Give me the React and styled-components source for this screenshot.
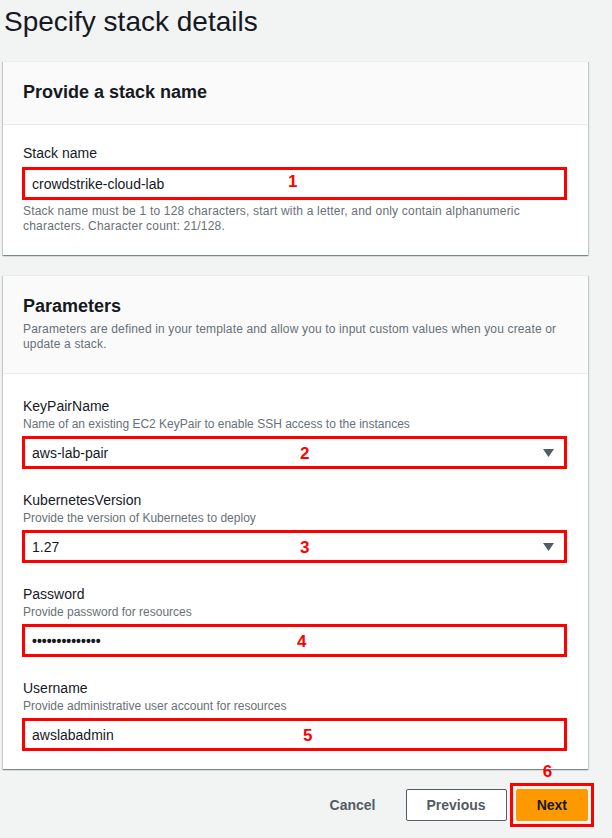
import React from 'react'
import styled, { createGlobalStyle } from 'styled-components'

const GlobalStyle = createGlobalStyle`
  body {
    margin: 0;
    background: #f2f3f3;
    font-family: "Liberation Sans", Arial, sans-serif;
    color: #16191f;
  }
`

function Arrow() {
  return (
    <svg width="11" height="8" viewBox="0 0 11 8">
      <path d="M0 0 H11 L5.5 8 Z" fill="#545b64" />
    </svg>
  )
}

function Field({ label, hint, value, num, numLeft, select }) {
  return (
    <FieldWrap>
      <Label>{label}</Label>
      {hint && <Hint>{hint}</Hint>}
      <InputBox>
        <span>{value}</span>
        <Num left={numLeft}>{num}</Num>
        {select && <ArrowSlot><Arrow /></ArrowSlot>}
      </InputBox>
    </FieldWrap>
  )
}

function App() {
  return (
    <Page>
      <GlobalStyle />
      <Title>Specify stack details</Title>

      <Card>
        <CardHead>
          <h2>Provide a stack name</h2>
        </CardHead>
        <CardBody first>
          <FieldWrap>
            <Label>Stack name</Label>
            <InputBox>
              <span>crowdstrike-cloud-lab</span>
              <Num left={263} up>1</Num>
            </InputBox>
            <Helper>
              Stack name must be 1 to 128 characters, start with a letter, and only contain alphanumeric
              <br />
              characters. Character count: 21/128.
            </Helper>
          </FieldWrap>
        </CardBody>
      </Card>

      <Card>
        <CardHead>
          <h2>Parameters</h2>
          <p>Parameters are defined in your template and allow you to input custom values when you create or update a stack.</p>
        </CardHead>
        <CardBody>
          <Field
            label="KeyPairName"
            hint="Name of an existing EC2 KeyPair to enable SSH access to the instances"
            value="aws-lab-pair"
            num="2"
            numLeft={275}
            select
          />
          <Field
            label="KubernetesVersion"
            hint="Provide the version of Kubernetes to deploy"
            value="1.27"
            num="3"
            numLeft={275}
            select
          />
          <Field
            label="Password"
            hint="Provide password for resources"
            value={<Dots>••••••••••••••</Dots>}
            num="4"
            numLeft={272}
          />
          <Field
            label="Username"
            hint="Provide administrative user account for resources"
            value="awslabadmin"
            num="5"
            numLeft={278}
          />
        </CardBody>
      </Card>

      <Actions>
        <LinkBtn>Cancel</LinkBtn>
        <Btn>Previous</Btn>
        <NextWrap>
          <StepNum>6</StepNum>
          <Btn primary>Next</Btn>
        </NextWrap>
      </Actions>
    </Page>
  )
}

export default App

const Page = styled.div`
  width: 585px;
  padding-left: 3px;
  padding-top: 4px;
  padding-bottom: 16px;
`

const Title = styled.h1`
  margin: 0 0 0 1px;
  font-size: 28px;
  font-weight: 400;
  line-height: 36px;
  color: #16191f;
  height: 57px;
`

const Card = styled.div`
  background: #fff;
  border-top: 1px solid #eaeded;
  box-shadow: 0 1px 1px 0 rgba(0, 28, 36, 0.3), 1px 1px 1px 0 rgba(0, 28, 36, 0.15),
    -1px 1px 1px 0 rgba(0, 28, 36, 0.15);
  margin-bottom: 20px;
`

const CardHead = styled.div`
  background: #fafafa;
  border-bottom: 1px solid #eaeded;
  padding: 19px 20px 21px;

  h2 {
    margin: 0;
    font-size: 18px;
    font-weight: 700;
    line-height: 22px;
    color: #16191f;
  }

  p {
    margin: 5px 0 0;
    font-size: 12px;
    line-height: 15px;
    letter-spacing: 0.15px;
    color: #687078;
  }
`

const CardBody = styled.div`
  padding: ${p => (p.first ? '18px 21px 21px 19px' : '22px 21px 18px 19px')};
  display: flex;
  flex-direction: column;
  gap: 21px;
`

const FieldWrap = styled.div`
  display: flex;
  flex-direction: column;
`

const Label = styled.div`
  font-size: 14px;
  line-height: 20px;
  color: #16191f;
  padding-left: 1px;
`

const Hint = styled.div`
  font-size: 12px;
  line-height: 16px;
  color: #687078;
  padding-left: 1px;
`

const Helper = styled.div`
  margin-top: 4px;
  font-size: 12px;
  line-height: 15px;
  letter-spacing: 0.2px;
  color: #687078;
  padding-left: 1px;
`

const InputBox = styled.div`
  position: relative;
  margin-top: 4px;
  height: 33px;
  box-sizing: border-box;
  border: 3px solid #ff0000;
  background: #fff;
  padding: 0 7px;
  display: flex;
  align-items: center;
  font-size: 14px;
  color: #16191f;
`

const Dots = styled.span`
  font-size: 14px;
  font-weight: 700;
`

const Num = styled.span`
  position: absolute;
  left: ${p => p.left}px;
  top: ${p => (p.up ? 2 : 5)}px;
  color: #ff0000;
  font-weight: 700;
  font-size: 17px;
  line-height: 20px;
`

const ArrowSlot = styled.span`
  position: absolute;
  right: 10px;
  top: 10px;
  display: flex;
`

const Actions = styled.div`
  display: flex;
  justify-content: flex-end;
  align-items: center;
  height: 32px;
`

const LinkBtn = styled.div`
  padding: 0 20px;
  font-size: 14px;
  font-weight: 700;
  color: #545b64;
  line-height: 32px;
  margin-right: 10px;
`

const Btn = styled.div`
  height: 32px;
  box-sizing: border-box;
  padding: 0 20px;
  display: flex;
  align-items: center;
  font-size: 14px;
  font-weight: 700;
  border-radius: 2px;
  border: 1px solid ${p => (p.primary ? '#ff9900' : '#545b64')};
  background: ${p => (p.primary ? '#ff9900' : '#fff')};
  color: ${p => (p.primary ? '#16191f' : '#545b64')};
`

const NextWrap = styled.div`
  position: relative;
  margin: -6px -6px -6px 3px;
  padding: 3px;
  border: 3px solid #ff0000;
`

const StepNum = styled.span`
  position: absolute;
  top: -24px;
  left: 30px;
  color: #ff0000;
  font-weight: 700;
  font-size: 17px;
  line-height: 20px;
`
